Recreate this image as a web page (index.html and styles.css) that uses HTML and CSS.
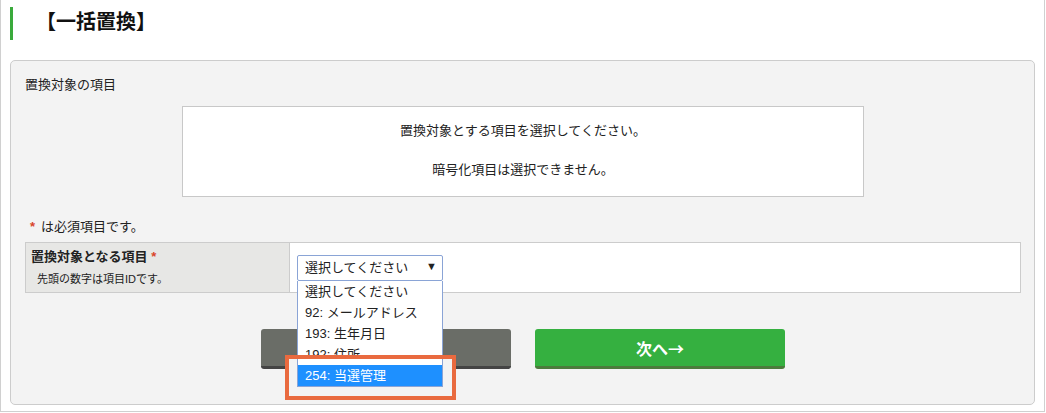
FILE: index.html
```html
<!DOCTYPE html>
<html lang="ja">
<head>
    <meta charset="UTF-8">
    <meta name="viewport" content="width=device-width, initial-scale=1.0">
    <title>一括置換</title>
    <link rel="stylesheet" href="styles.css">
</head>
<body>
    <div class="frame">
        <h1 class="page-title">【一括置換】</h1>

        <div class="panel">
            <p class="section-label">置換対象の項目</p>

            <div class="notice">
                <p>置換対象とする項目を選択してください。</p>
                <p>暗号化項目は選択できません。</p>
            </div>

            <p class="required-note"><span class="req">*</span>は必須項目です。</p>

            <table class="form-table">
                <tr>
                    <th>
                        置換対象となる項目 <span class="req">*</span>
                        <small>先頭の数字は項目IDです。</small>
                    </th>
                    <td>
                        <div class="select-wrap">
                            <div class="select">選択してください<span class="arrow">▼</span></div>
                            <ul class="select-list">
                                <li>選択してください</li>
                                <li>92: メールアドレス</li>
                                <li>193: 生年月日</li>
                                <li>192: 住所</li>
                                <li class="active">254: 当選管理</li>
                            </ul>
                            <!-- highlighted option -->
                            <div class="callout">
                                <div class="callout-row"><span>254: 当選管理</span></div>
                            </div>
                        </div>
                    </td>
                </tr>
            </table>

            <div class="actions">
                <button type="button" class="btn btn-back" aria-label="戻る"></button>
                <button type="button" class="btn btn-next">次へ→</button>
            </div>
        </div>
    </div>
</body>
</html>
```

FILE: styles.css
```css
body {
    margin: 0;
    padding: 0;
    background-color: #fff;
    font-family: "Liberation Sans", "Noto Sans CJK JP", sans-serif;
    color: #222;
}

.frame {
    width: 1045px;
    box-sizing: border-box;
    border: 1px solid #d0d0d0;
    border-top: none;
    padding: 7px 9px 6px 9px;
}

.page-title {
    margin: 0;
    height: 33px;
    line-height: 30px;
    border-left: 3px solid #3aaa3c;
    padding-left: 23px;
    font-size: 20px;
    font-weight: bold;
    color: #111;
}

.panel {
    margin-top: 20px;
    background-color: #f3f3f3;
    border: 1px solid #cccccc;
    border-radius: 5px;
    padding: 16px 13px 35px 14px;
}

.section-label {
    margin: 0;
    font-size: 13px;
    line-height: 16px;
}

.notice {
    width: 682px;
    box-sizing: border-box;
    margin: 13px auto 0;
    background-color: #fff;
    border: 1px solid #c8c8c8;
    padding: 16px 0 18px;
    text-align: center;
    font-size: 13px;
    line-height: 16px;
}

.notice p {
    margin: 0;
}

.notice p + p {
    margin-top: 23px;
}

.required-note {
    margin: 22px 0 7px 5px;
    font-size: 13px;
    line-height: 16px;
}

.req {
    color: #d9452b;
    font-weight: bold;
}

.required-note .req {
    margin-right: 6px;
}

.form-table {
    width: 100%;
    border-collapse: collapse;
    background-color: #fff;
}

.form-table th,
.form-table td {
    border: 1px solid #cccccc;
}

.form-table th {
    width: 253px;
    background-color: #e7e7e5;
    text-align: left;
    vertical-align: top;
    padding: 6px 5px;
    font-size: 13px;
    line-height: 16px;
}

.form-table th small {
    display: block;
    margin: 7px 0 0 6px;
    font-size: 11px;
    font-weight: normal;
    line-height: 14px;
}

.form-table td {
    padding: 0 7px;
    vertical-align: middle;
}

.select-wrap {
    position: relative;
    width: 146px;
}

.select {
    height: 26px;
    box-sizing: border-box;
    border: 1px solid #8aa4d6;
    border-radius: 2px;
    padding-left: 7px;
    font-size: 13px;
    line-height: 24px;
    background-color: #fff;
}

.arrow {
    position: absolute;
    right: 6px;
    top: 0;
    font-size: 11px;
    line-height: 23px;
}

.select-list {
    position: absolute;
    left: 0;
    top: 26px;
    width: 146px;
    box-sizing: border-box;
    margin: 0;
    padding: 0;
    list-style: none;
    background-color: #fff;
    border: 1px solid #8aa4d6;
    border-top: none;
    z-index: 2;
}

.select-list li {
    height: 21px;
    padding-left: 7px;
    font-size: 13px;
    line-height: 21px;
    white-space: nowrap;
}

.select-list li.active {
    background-color: #1e90ff;
    color: #fff;
}

.callout {
    position: absolute;
    left: -12px;
    top: 100px;
    width: 171px;
    height: 45px;
    box-sizing: border-box;
    border: 4px solid #e96a3f;
    background-color: #f3f3f3;
    z-index: 3;
}

.callout-row {
    width: 146px;
    box-sizing: border-box;
    margin-left: 8px;
    padding-top: 6px;
    background-color: #fff;
    border: 1px solid #8aa4d6;
    border-top: none;
}

.callout-row span {
    display: block;
    height: 21px;
    padding-left: 7px;
    background-color: #1e90ff;
    color: #fff;
    font-size: 13px;
    line-height: 21px;
}

.actions {
    display: flex;
    justify-content: center;
    gap: 24px;
    margin-top: 36px;
}

.btn {
    width: 250px;
    height: 40px;
    border: none;
    border-radius: 3px;
    color: #fff;
    font-family: "Noto Sans CJK JP", sans-serif;
    font-size: 16px;
    font-weight: bold;
    cursor: pointer;
}

.btn-back {
    background-color: #6a6d67;
    border-bottom: 3px solid #444;
}

.btn-next {
    background-color: #35b040;
    border-bottom: 3px solid #4c7c3c;
}
```
